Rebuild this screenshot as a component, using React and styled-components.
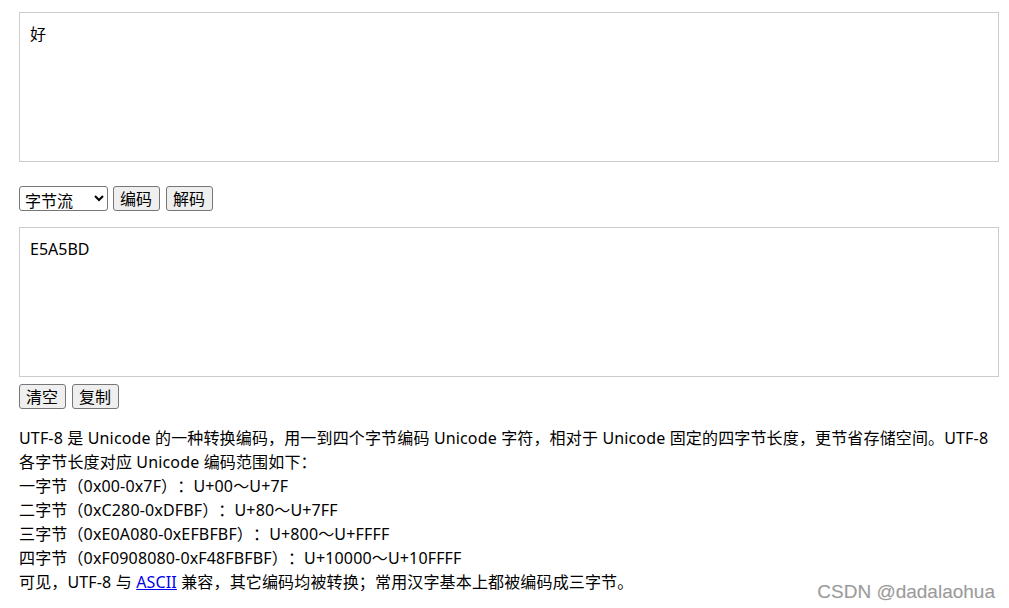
import React, { useState } from "react";
import styled, { createGlobalStyle } from "styled-components";

const GlobalStyle = createGlobalStyle`
  html, body {
    margin: 0;
    padding: 0;
    background: #fff;
  }
  body {
    font-family: "Noto Sans", "Noto Sans CJK SC", sans-serif;
    font-size: 16px;
    color: #000;
    text-spacing-trim: space-all;
  }
`;

const Page = styled.div`
  position: relative;
  padding: 12px 11px 0 19px;
  height: 608px;
  box-sizing: border-box;
  overflow: hidden;
`;

const TextBox = styled.textarea`
  display: block;
  box-sizing: border-box;
  width: 980px;
  height: 150px;
  margin: 0;
  padding: 9px 10px;
  border: 1px solid #cccccc;
  border-radius: 0;
  resize: none;
  outline: none;
  font-family: "Noto Sans", "Noto Sans CJK SC", sans-serif;
  font-size: 16px;
  line-height: 24px;
  color: #000;
`;

const Toolbar = styled.div`
  display: flex;
  align-items: center;
  margin: ${(p) => p.$margin};
`;

const Select = styled.select`
  box-sizing: border-box;
  width: 89px;
  height: 25px;
  margin: 0;
  padding: 0 0 0 1px;
  border: 1px solid #767676;
  border-radius: 3px;
  background: #fff;
  font-family: "Noto Sans CJK SC", sans-serif;
  font-size: 16px;
  color: #000;
`;

const Button = styled.button`
  box-sizing: border-box;
  height: 25px;
  margin: 0;
  padding: 0 7px 0 6px;
  border: 1px solid #767676;
  border-radius: 3px;
  background: #efefef;
  font-family: "Noto Sans CJK SC", sans-serif;
  font-size: 16px;
  line-height: 23px;
  color: #000;
  cursor: pointer;
  &:hover {
    background: #e5e5e5;
  }
  select + & {
    margin-left: 5px;
  }
  & + & {
    margin-left: 6px;
  }
`;

const Info = styled.div`
  margin-top: 17px;
  font-size: 16px;
  line-height: 24px;
  white-space: nowrap;
  letter-spacing: 0.15px;
`;

const Line = styled.div``;

const Link = styled.a`
  color: #0000ee;
  text-decoration: underline;
`;

const Watermark = styled.div`
  position: absolute;
  right: 14px;
  bottom: 5px;
  font-family: "Liberation Sans", Arial, sans-serif;
  font-size: 19px;
  color: #9a9a9a;
  text-shadow: 0 0 1px #fff, 0 0 1px #ddd;
`;

export default function App() {
  const [input, setInput] = useState("好");
  const [output, setOutput] = useState("E5A5BD");

  return (
    <>
      <GlobalStyle />
      <Page>
        <TextBox value={input} onChange={(e) => setInput(e.target.value)} />
        <Toolbar $margin="24px 0 16px">
          <Select defaultValue="bytes">
            <option value="bytes">字节流</option>
          </Select>
          <Button>编码</Button>
          <Button>解码</Button>
        </Toolbar>
        <TextBox value={output} onChange={(e) => setOutput(e.target.value)} />
        <Toolbar $margin="7px 0 0">
          <Button onClick={() => setOutput("")}>清空</Button>
          <Button>复制</Button>
        </Toolbar>
        <Info>
          <Line>
            UTF-8 是 Unicode 的一种转换编码，用一到四个字节编码 Unicode 字符，相对于 Unicode
            固定的四字节长度，更节省存储空间。UTF-8
          </Line>
          <Line>各字节长度对应 Unicode 编码范围如下：</Line>
          <Line>一字节（0x00-0x7F）：U+00～U+7F</Line>
          <Line>二字节（0xC280-0xDFBF）：U+80～U+7FF</Line>
          <Line>三字节（0xE0A080-0xEFBFBF）：U+800～U+FFFF</Line>
          <Line>四字节（0xF0908080-0xF48FBFBF）：U+10000～U+10FFFF</Line>
          <Line>
            可见，UTF-8 与 <Link href="#">ASCII</Link> 兼容，其它编码均被转换；常用汉字基本上都被编码成三字节。
          </Line>
        </Info>
        <Watermark>CSDN @dadalaohua</Watermark>
      </Page>
    </>
  );
}
